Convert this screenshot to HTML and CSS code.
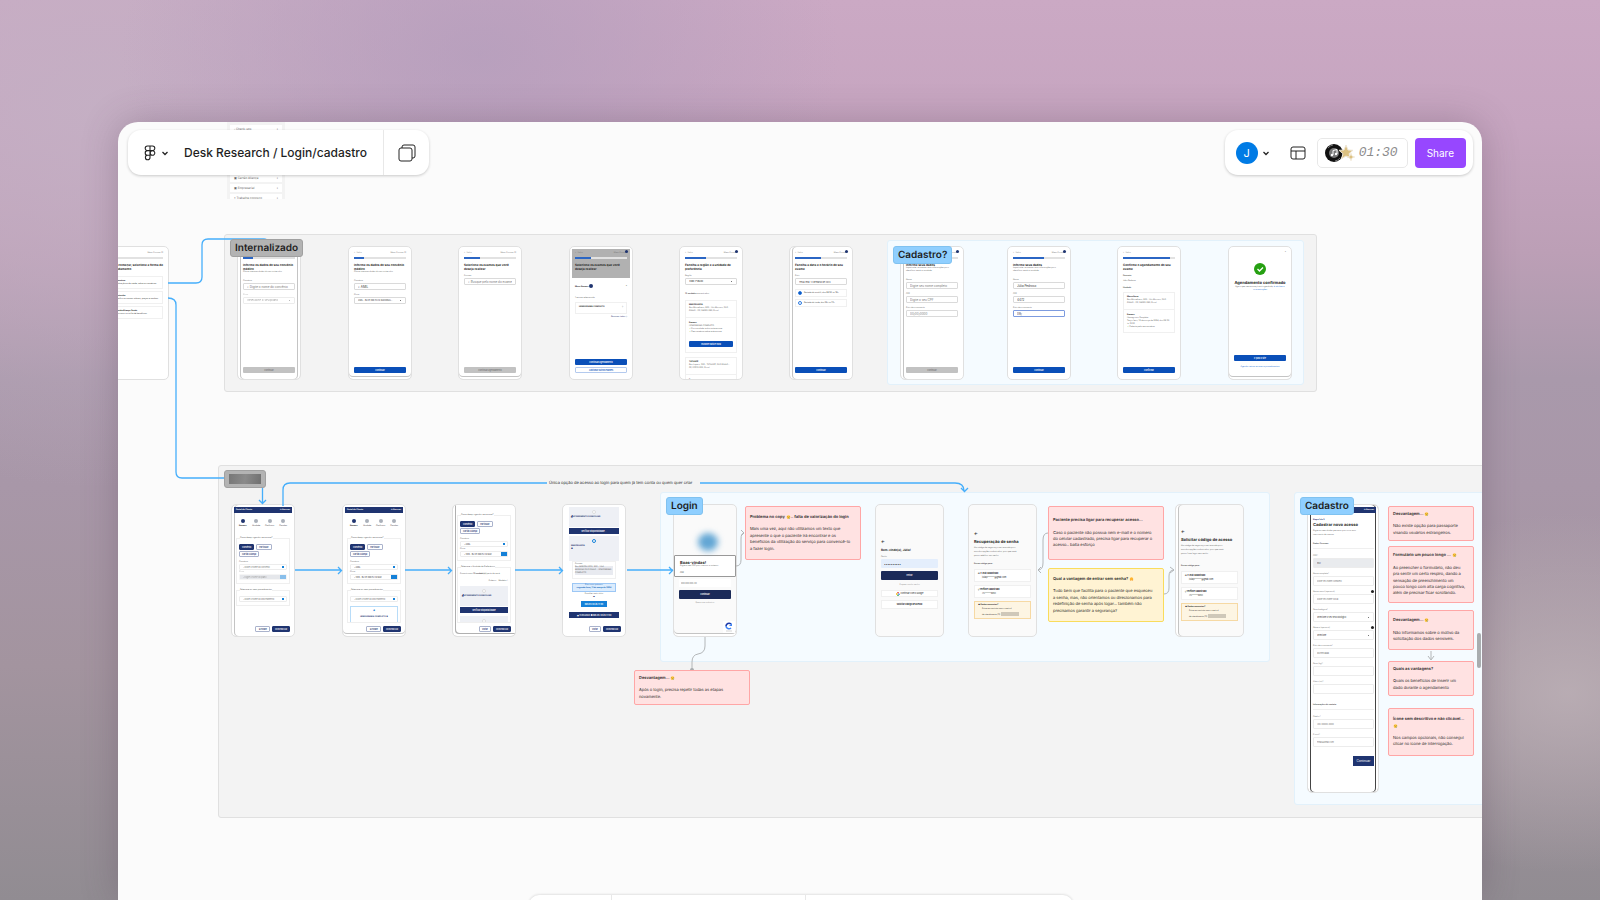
FILE: index.html
```
<!-- Index.html -->
<!DOCTYPE html>
<html lang="pt-BR">
<head>
    <meta charset="utf-8">
    <title>Desk Research / Login/cadastro</title>
    <meta name="viewport" content="width=device-width, initial-scale=1.0">
    <link rel="stylesheet" href="styles.css">
</head>
<body>
    <!-- Shared icons -->
    <svg class="sprite" aria-hidden="true">
        <symbol id="sad" viewBox="0 0 16 16">
            <circle cx="8" cy="8" r="7.5" fill="#ffc83d"/>
            <circle cx="5" cy="7" r="1.3" fill="#5c3a0a"/>
            <circle cx="11" cy="7" r="1.3" fill="#5c3a0a"/>
            <path d="M5 12q3-3 6 0" fill="none" stroke="#5c3a0a" stroke-width="1.4"/>
            <path d="M11 8.5q4 4.5 1 6.500q-3.500-1-1-6.500" fill="#4aa8f0"/>
        </symbol>
        <symbol id="hug" viewBox="0 0 16 16">
            <circle cx="8" cy="7" r="6.500" fill="#ffb52e"/>
            <path d="M1 10q3-1 5 2l-2 3q-3-1-3-5M15 10q-3-1-5 2l2 3q3-1 3-5" fill="#f28c1b"/>
        </symbol>
        <symbol id="chevron" viewBox="0 0 8 8">
            <path d="M1.500 3l2.500 2.500L6.500 3" fill="none" stroke="#222" stroke-width="1.300"/>
        </symbol>
    </svg>

    <main class="window">
        <div class="board">
            <!-- Sections -->
            <div class="section section-internal"></div>
            <div class="section section-portal"></div>
            <div class="section blue section-confirm"></div>
            <div class="section blue section-login"></div>
            <div class="section blue section-signup"></div>

            <!-- Menu clipped by the toolbar -->
            <ul class="mini-menu">
                <li>▫ Check-ups <b>›</b></li>
                <li class="gap">▣ Cartão Aliança <b>›</b></li>
                <li>▣ Empresarial <b>›</b></li>
                <li>▪ Trabalhe conosco <b>›</b></li>
            </ul>

            <!-- First flow -->
            <div class="phone a0">
                <div class="top"><span></span><span>Meus Exames ▢</span></div>
                <div class="progress"></div>
                <h3>Para começar, selecione a forma de agendamento</h3>
                <div class="option mt-6"><b>Convênio</b><span>Utilize plano de saúde, sobre os convênios</span></div>
                <div class="option"><b>Particular</b><span>Confira os nossos valores, preços e combos</span></div>
                <div class="option"><b>Cartão Aliança Saúde</b><span>Para usar o cartão de benefícios</span></div>
            </div>

            <div class="phone a1 edge-sides">
                <div class="top"></div>
                <div class="progress p20"></div>
                <h3>Informe os dados do seu convênio médico</h3>
                <p>São os mesmos dados da sua carteirinha</p>
                <label class="field mt-6">Convênio<input type="text" placeholder="⌕ Digite o nome do convênio"></label>
                <label class="field mt-4 off">Plano<select><option>Selecione o seu plano</option></select></label>
                <button class="btn gray">Continuar</button>
            </div>

            <div class="phone a2 edge-bottom">
                <div class="top"><span>← Voltar</span><span>Meus Exames ▢</span></div>
                <div class="progress p20"></div>
                <h3>Informe os dados do seu convênio médico</h3>
                <p>São os mesmos dados da sua carteirinha</p>
                <label class="field mt-6">Convênio<input type="text" value="⌕ AMIL"></label>
                <label class="field mt-4">Plano<select class="long"><option>AMIL - BLUE 300 PLUS NACIONAL -</option></select></label>
                <button class="btn">Continuar</button>
            </div>

            <div class="phone a3 edge-bottom">
                <div class="top"><span>← Voltar</span><span>Meus Exames ▢</span></div>
                <div class="progress p30"></div>
                <h3>Selecione os exames que você deseja realizar</h3>
                <label class="field mt-4">Exames<input type="text" placeholder="⌕ Busque pelo nome do exame"></label>
                <button class="btn gray">Continuar agendamento</button>
            </div>

            <div class="phone a4">
                <div class="shade">
                    <div class="top dotted"><span>← Voltar</span><span>Meus Exames</span></div>
                    <div class="progress p30"></div>
                    <h3>Selecione os exames que você deseja realizar</h3>
                </div>
                <div class="sheet">
                    <div class="line"><b>Meus Exames <i class="dot"></i></b><span>×</span></div>
                    <p class="mt-8">1 exame selecionado</p>
                    <div class="box row mt-2"><b>HEMOGRAMA COMPLETO</b><span>▯</span></div>
                    <p class="right navy mt-2">Remover todos ▯</p>
                </div>
                <button class="btn">Continuar agendamento</button>
                <button class="btn outline">Adicionar outros exames</button>
            </div>

            <div class="phone a5">
                <div class="top dotted"><span>← Voltar</span><span>Meus Exames</span></div>
                <div class="progress p40"></div>
                <h3>Escolha a região e a unidade de preferência</h3>
                <label class="field mt-4">Região<select><option>São Paulo</option></select></label>
                <p class="mt-8"><b>13 unidades</b> encontradas</p>
                <div class="card mt-4">
                    <b>MARSELHESA</b>
                    <p>Rua Marselhesa, 500 - Vila Mariana, SÃO PAULO - SP, 04020-060, Brasil</p>
                    <hr>
                    <b>Exames</b>
                    <p>HEMOGRAMA COMPLETO</p>
                    <p class="ok">Essa unidade realiza este exame</p>
                    <p class="ok">Seu convênio cobre este exame</p>
                    <button class="btn">Escolher data e hora</button>
                </div>
                <div class="card open mt-4">
                    <b>TATUAPÉ</b>
                    <p>Rua Itapura, 300 - TATUAPÉ, SÃO PAULO - SP, 03310-000, Brasil</p>
                    <hr>
                    <b>Exames</b>
                </div>
            </div>

            <div class="phone a6 edge-left">
                <div class="top dotted"><span>← Voltar</span><span>Meus Exames</span></div>
                <div class="progress p50"></div>
                <h3>Escolha a data e o horário do seu exame</h3>
                <label class="field mt-4">Data<input class="long" type="text" value="Terça-feira, 12 de março de 2024"></label>
                <label class="pick mt-4"><input type="radio" name="periodo" checked> Período da manhã, das 06:30 às 12h</label>
                <label class="pick mt-2"><input type="radio" name="periodo"> Período da tarde, das 12h às 17h</label>
                <button class="btn">Continuar</button>
            </div>

            <div class="phone a7 edge-left">
                <div class="top dotted"><span></span><span>Exames</span></div>
                <div class="progress"></div>
                <h3>Informe seus dados</h3>
                <p>Importante: usaremos suas informações para identificar você na unidade.</p>
                <label class="field mt-6">Nome<input type="text" placeholder="Digite seu nome completo"></label>
                <label class="field mt-4">CPF<input type="text" placeholder="Digite o seu CPF"></label>
                <label class="field mt-4">Data de nascimento<input type="text" placeholder="00/00/0000"></label>
                <button class="btn gray">Continuar</button>
            </div>

            <div class="phone a8">
                <div class="top dotted"><span>← Voltar</span><span>Meus Exames</span></div>
                <div class="progress p60"></div>
                <h3>Informe seus dados</h3>
                <p>Importante: usaremos suas informações para identificar você na unidade.</p>
                <label class="field mt-6">Nome<input type="text" value="Júlia Pedroso"></label>
                <label class="field mt-4">CPF<input type="text" value="4472"></label>
                <label class="field mt-4 active">Data de nascimento<input type="text" value="09/"></label>
                <button class="btn">Continuar</button>
            </div>

            <div class="phone a9">
                <div class="top"><span>← Voltar</span></div>
                <div class="progress p90"></div>
                <h3>Confirme o agendamento do seu exame</h3>
                <p class="mt-4"><b>Paciente</b></p>
                <p class="mt-2">Júlia Pedroso</p>
                <p class="mt-4"><b>Unidade</b></p>
                <div class="card mt-2">
                    <b>Marselhesa</b>
                    <p>Rua Marselhesa, 500 - Vila Mariana, SÃO PAULO - SP, 04020-060, Brasil</p>
                    <hr>
                    <b>Exames</b>
                    <p>Hemograma Completo</p>
                    <p>Terça-feira, 12 de março de 2024, das 06:30 às 12:00</p>
                    <p class="ok">Coberto pelo seu convênio</p>
                </div>
                <button class="btn">Confirmar</button>
            </div>

            <div class="phone a10 edge-bottom">
                <p class="right">×</p>
                <svg class="check" viewBox="0 0 12 12"><circle cx="6" cy="6" r="6" fill="#26a012"/><path d="M3.500 6l2 2 3.500-3.500" fill="none" stroke="#fff" stroke-width="1.300"/></svg>
                <h3 class="center big">Agendamento confirmado</h3>
                <p class="center">Agora que seu exame já está agendado, <a href="#">é só checar as orientações</a></p>
                <button class="btn">Ir para o site</button>
                <a class="more" href="#">Agendar outros exames e procedimentos</a>
            </div>

            <!-- Second flow -->
            <div class="phone portal b1 edge-left">
                <div class="nav"><b>Portal do Cliente</b><b>➔ Acessar</b></div>
                <div class="steps"><b>Exames</b><span>Unidade</span><span>Confirmar</span><span>Concluir</span></div>
                <fieldset>
                    <legend>Como deseja agendar seu exame?</legend>
                    <div class="chips"><button class="on">Convênio</button><button>Particular</button><button>Cartão Aliança</button></div>
                    <label class="field mt-4">Convênio<input type="text" placeholder="⌕ Digite o nome do convênio"></label>
                    <label class="field combo off">Plano<select><option>⌕ Digite o nome do plano</option></select></label>
                </fieldset>
                <fieldset>
                    <legend>Selecione os seus procedimentos</legend>
                    <label class="field"><input type="text" aria-label="Procedimento" placeholder="⌕ Digite o nome do procedimento"></label>
                </fieldset>
                <div class="actions"><button>◀ HOME</button><button class="on">CONTINUAR</button></div>
            </div>

            <div class="phone portal b2 edge-bottom">
                <div class="nav"><b>Portal do Cliente</b><b>➔ Acessar</b></div>
                <div class="steps"><b>Exames</b><span>Unidade</span><span>Confirmar</span><span>Concluir</span></div>
                <fieldset>
                    <legend>Como deseja agendar seu exame?</legend>
                    <div class="chips"><button class="on">Convênio</button><button>Particular</button><button>Cartão Aliança</button></div>
                    <label class="field mt-4">Convênio<input type="text" value="⌕ AMIL"></label>
                    <label class="field combo">Plano<select><option>⌕ 1010 - BLUE 300 PLUS NAC</option></select></label>
                </fieldset>
                <fieldset class="bare">
                    <legend>Selecione os seus procedimentos</legend>
                    <label class="field"><input type="text" aria-label="Procedimento" placeholder="⌕ Digite o nome do procedimento"></label>
                    <div class="exam"><i>◆</i><b>HEMOGRAMA COMPLETO ✖</b></div>
                </fieldset>
                <div class="actions"><button>◀ HOME</button><button class="on">CONTINUAR</button></div>
            </div>

            <div class="phone portal b3 edge-left edge-bottom">
                <fieldset class="first">
                    <legend>Como deseja agendar seu exame?</legend>
                    <div class="chips"><button class="on">Convênio</button><button>Particular</button><button>Cartão Aliança</button></div>
                    <label class="field mt-4">Convênio<input type="text" value="⌕ AMIL"></label>
                    <label class="field combo">Plano<select><option>⌕ 1010 - BLUE 300 PLUS NAC</option></select></label>
                </fieldset>
                <fieldset class="bare">
                    <legend>Selecione a Unidade de Preferência</legend>
                    <p>Encontramos <b>13 unidade(s)</b> perto de você</p>
                    <p class="right mt-4">Ordenar: &nbsp; Modelos ˅</p>
                    <div class="place mt-4"><i class="ring"></i><b>▟ ATENDIMENTO DOMICILIAR</b></div>
                    <button class="bar">Verificar disponibilidade</button>
                    <div class="place low"><i class="ring"></i></div>
                </fieldset>
                <div class="actions"><button>Voltar</button><button class="on">CONTINUAR</button></div>
            </div>

            <div class="phone portal b4">
                <div class="place mt-2"><i class="ring"></i><b>▟ ATENDIMENTO DOMICILIAR</b></div>
                <button class="bar">Verificar disponibilidade...</button>
                <div class="place mt-2 tall"><i class="ring fill"></i><b>MARSELHESA</b><b>●</b></div>
                <div class="box inset">
                    <p>Exames</p>
                    <p class="hl">Rua MARSELHESA, 500 - VILA MARIANA SÃO PAULO - HEMOGRAMA COMPLETO</p>
                </div>
                <div class="date">Data mais próxima:<b>segunda-feira, 11 de março de 2024</b></div>
                <p class="center">Escolher outra data</p>
                <p class="center navy">▣</p>
                <button class="time">das 06:30 às 17:00</button>
                <button class="bar">▣ 11/03/2024 ● das 06:30 às 17:00</button>
                <div class="actions"><button>Voltar</button><button class="on">CONTINUAR</button></div>
            </div>

            <div class="phone login b5 edge-bottom">
                <div class="blob"></div>
                <div class="welcome"><h3 class="big">Boas-vindas!</h3><p>Digite o seu CPF para acessar o sistema.</p><label for="cpf">CPF</label></div>
                <input id="cpf" type="text" placeholder="000.000.000-00">
                <button class="btn dark">Continuar</button>
                <p class="center">Quero me cadastrar</p>
                <svg class="captcha" viewBox="0 0 12 12"><path d="M3 5a3 3 0 0 1 5-2" fill="none" stroke="#1c3aa9" stroke-width="1.600"/><path d="M9 2v3H6" fill="#4285f4"/><path d="M3 5a3 3 0 0 0 5 2" fill="none" stroke="#4285f4" stroke-width="1.600"/><path d="M3 10h6" stroke="#bbb" stroke-width=".6"/></svg>
            </div>

            <div class="phone access b6">
                <b class="back first">←</b>
                <h3>Bem-vindo(a), Júlia!</h3>
                <label class="field mt-4">Senha<input type="text" value="••••••••••"></label>
                <button class="btn dark">Entrar</button>
                <p class="center mt-4"><a class="muted" href="#">Esqueci minha senha</a></p>
                <button class="plain">
                    <svg viewBox="0 0 8 8"><path d="M6 2a3 3 0 0 0-4 0" stroke="#ea4335"/><path d="M2 2a3 3 0 0 0 0 4" stroke="#fbbc05"/><path d="M2 6a3 3 0 0 0 4 0" stroke="#34a853"/><path d="M6 6q1-1 1-2H4" stroke="#4285f4"/></svg>
                    Continuar com o Google
                </button>
                <button class="plain strong">Solicitar código de acesso</button>
            </div>

            <div class="phone access b7">
                <b class="back">←</b>
                <h3 class="big">Recuperação de senha</h3>
                <p class="copy">Um código de segurança será enviado para<br>uma das opções cadastradas, para que você<br>possa redefinir sua senha.</p>
                <p class="copy mt-4"><b>Enviar código para:</b></p>
                <button class="plain two"><b>✉ E-mail cadastrado</b><span>julia.p*******@gmail.com</span></button>
                <button class="plain two"><b>▯ Telefone cadastrado</b><span>(11)******8852</span></button>
                <div class="warn"><b>▲ Dados incorretos?</b><span>Entre em contato com a central</span><span>de atendimento (11) <i></i></span></div>
            </div>

            <div class="phone access b8 edge-left">
                <b class="back">←</b>
                <h3 class="big">Solicitar código de acesso</h3>
                <p class="copy">Um código de segurança será enviado para<br>uma das opções cadastradas, para que você<br>possa fazer login sem senha.</p>
                <p class="copy mt-8"><b>Enviar código para:</b></p>
                <button class="plain two"><b>✉ E-mail cadastrado</b><span>julia.p*******@gmail.com</span></button>
                <button class="plain two"><b>▯ Telefone cadastrado</b><span>(11)******8852</span></button>
                <div class="warn"><b>▲ Dados incorretos?</b><span>Entre em contato com a central</span><span>de atendimento (11) <i></i></span></div>
            </div>

            <div class="phone signup c1">
                <div class="nav"><b></b><b>➔ Acessar</b></div>
                <p class="navy mt-6"><b>Etapa 1 de 3</b></p>
                <h3 class="big">Cadastrar novo acesso</h3>
                <p class="copy">Digite os seus dados pessoais para criar uma<br>nova conta de acesso.</p>
                <p class="copy rule"><b>Dados Pessoais</b></p>
                <label class="field locked">CPF*<input type="text" value="552"></label>
                <label class="field">Nome completo*<input type="text" placeholder="Digite seu nome completo"></label>
                <label class="field help">Nome social (opcional)<input type="text" placeholder="Digite seu nome social"></label>
                <label class="field">Sexo biológico*<select><option>Selecione o seu sexo biológico</option></select></label>
                <label class="field help">Gênero (opcional)<select><option>Selecione</option></select></label>
                <label class="field">Data de nascimento*<input type="text" placeholder="dd/mm/aaaa"></label>
                <label class="field">Peso (kg)*<input type="text"></label>
                <label class="field">Altura (m)*<input type="text"></label>
                <p class="copy rule"><b>Informações de contato</b></p>
                <label class="field">Celular*<input type="text" placeholder="(00) 00000-0000"></label>
                <label class="field">E-mail*<input type="text" placeholder="email@gmail.com"></label>
                <button class="send">Continuar</button>
            </div>

            <!-- Connectors -->
            <svg class="links" viewBox="118 122 1364 778" preserveAspectRatio="xMinYMin slice">
                <g class="blue-line">
                    <path d="M168 283h28q6 0 6-6v-32q0-6 6-6h56q3 0 3 2"/>
                    <path d="M168 298q8 0 8 7v167q0 6 6 6h42"/>
                    <path d="M262.500 488v15M259 500l3.500 3.500L266 500"/>
                    <path d="M283 506v-16q0-7 7-7h257M700 483h255q9 0 9 8M961 488l3.500 3.500L968 488"/>
                    <path d="M295 570h46M338 567l3.500 3.500L338 574M405 570h46M448 567l3.500 3.500L448 574M515 570h47M559 567l3.500 3.500L559 574M627 570h46M669 567l3.500 3.500L669 574"/>
                </g>
                <g class="gray-line">
                    <path d="M736 566q5 0 5-6v-21q0-6 3-6M741 530l3 3-3 3"/>
                    <path d="M705 637v9q0 7-7 8-6 1-6 8v8"/>
                    <path d="M1048 533q-5 0-5 7v23q0 7-5 7M1041 567l-3 3 3 3"/>
                    <path d="M1164 594q5 0 5-6v-12q0-6 5-6M1170 567l4 3-4 3"/>
                    <path d="M1431 651v8M1428 656l3 4 3-4"/>
                </g>
                <circle cx="692" cy="670" r="2" fill="#a9acae"/>
            </svg>
            <span class="link-text">Única opção de acesso ao login para quem já tem conta ou quem quer criar</span>

            <!-- Section names -->
            <h2 class="tag gray-tag t1">Internalizado</h2>
            <h2 class="tag t2">Cadastro?</h2>
            <div class="tag gray-tag t3"><i></i></div>
            <h2 class="tag t4">Login</h2>
            <h2 class="tag t5">Cadastro</h2>

            <!-- Notes -->
            <article class="note n1"><h4>Problema no copy <svg><use href="#sad"/></svg>.. falta de valorização do login</h4><p>Mais uma vez, aqui não utilizamos um texto que<br>apresente o que o paciente irá encontrar e os<br>benefícios da utilização do serviço para convencê-lo<br>a fazer login.</p></article>
            <article class="note n2"><h4>Desvantagem... <svg><use href="#sad"/></svg></h4><p>Após o login, precisa repetir todas as etapas<br>novamente.</p></article>
            <article class="note n3"><h4>Paciente precisa ligar para recuperar acesso...</h4><p>Caso o paciente não possua nem e-mail e o número<br>do celular cadastrado, precisa ligar para recuperar o<br>acesso.. baita esforço</p></article>
            <article class="note yellow n4"><h4>Qual a vantagem de entrar sem senha? <svg><use href="#hug"/></svg></h4><p>Tudo bem que facilita para o paciente que esqueceu<br>a senha, mas, não orientamos ou direcionamos para<br>redefinição de senha após logar... também não<br>precisamos garantir a segurança?</p></article>
            <article class="note narrow n5"><h4>Desvantagem... <svg><use href="#sad"/></svg></h4><p>Não existe opção para passaporte<br>visando usuários estrangeiros.</p></article>
            <article class="note narrow n6"><h4>Formulário um pouco longo ... <svg><use href="#sad"/></svg></h4><p>Ao preencher o formulário, não deu<br>pra sentir um certo respiro, dando a<br>sensação de preenchimento um<br>pouco longo com alta carga cognitiva,<br>além de precisar ficar scrollando.</p></article>
            <article class="note narrow n7"><h4>Desvantagem... <svg><use href="#sad"/></svg></h4><p>Não informamos sobre o motivo da<br>solicitação dos dados sensíveis.</p></article>
            <article class="note narrow n8"><h4>Quais as vantagens?</h4><p>Quais os benefícios de inserir um<br>dado durante o agendamento</p></article>
            <article class="note narrow n9"><h4>Ícone sem descritivo e não clicável...<br><svg><use href="#sad"/></svg></h4><p>Nos campos opcionais, não consegui<br>clicar no ícone de interrogação.</p></article>
        </div>

        <header class="toolbars">
            <div class="toolbar">
                <button class="menu-button" aria-label="Menu">
                    <svg class="logo" viewBox="0 0 12 16"><path d="M6 1H3.500a2.300 2.300 0 0 0 0 4.600H6zM6 1h2.500a2.300 2.300 0 0 1 0 4.600H6M6 5.600H3.500a2.300 2.300 0 0 0 0 4.600H6zM8.500 5.600a2.300 2.300 0 1 1 0 4.600 2.300 2.300 0 0 1 0-4.600M6 10.200H3.500A2.300 2.300 0 1 0 6 12.500zM6 1v11.500" fill="none" stroke="#222" stroke-width="1.100"/></svg>
                    <svg class="small"><use href="#chevron"/></svg>
                </button>
                <h1>Desk Research / Login/cadastro</h1>
                <button class="pages" aria-label="Pages">
                    <svg viewBox="0 0 18 18"><rect x="1" y="4" width="13" height="13" rx="2"/><path d="M4 4V3a2 2 0 0 1 2-2h9a2 2 0 0 1 2 2v9a2 2 0 0 1-2 2h-1"/></svg>
                </button>
            </div>
            <div class="toolbar right-bar">
                <button class="user" aria-label="Account"><span class="avatar">J</span><svg class="small"><use href="#chevron"/></svg></button>
                <button class="layout" aria-label="Layout">
                    <svg viewBox="0 0 16 14"><rect x="1" y="1" width="14" height="12" rx="2"/><path d="M1 5h14M6 5v8"/></svg>
                </button>
                <button class="timer">
                    <svg viewBox="0 0 30 20">
                        <circle cx="9" cy="10" r="9" fill="#111"/>
                        <path d="M3 5a8 8 0 0 1 5-3M15 15a8 8 0 0 1-5 3" stroke="#777" fill="none"/>
                        <circle cx="9" cy="10" r="5" fill="#777"/>
                        <path d="M8 12V7.500l4-1V11" stroke="#fff" fill="none"/>
                        <circle cx="7" cy="12" r="1.200" fill="#fff"/><circle cx="11" cy="11" r="1.200" fill="#fff"/>
                        <path d="M21 2l2 5 5 .3-4 3.400 1.500 5-4.500-2.700-4.500 2.700 1.500-5-4-3.400 5-.3z" fill="#dcc181" stroke="#eee6d6"/>
                        <path d="M26 10l1 3 3 1-3 1-1 3-1-3-3-1 3-1z" fill="#dcc181" stroke="#f3eee3" stroke-width=".7"/>
                    </svg>
                    <span>01:30</span>
                </button>
                <button class="share">Share</button>
            </div>
        </header>

        <div class="scroll-thumb"></div>
        <div class="dock"><span></span><span></span><span></span></div>
    </main>
</body>
</html>
```
FILE: styles.css
```
* {
    margin: 0;
    padding: 0;
    box-sizing: border-box;
}

body {
    height: 100vh;
    padding: 122px 118px 0;
    overflow: hidden;
    font-family: Inter, sans-serif;
    color: #1e1e1e;
    background:
        radial-gradient(ellipse 240px 180px at 98% 77%, rgba(190, 178, 184, 0.8), transparent),
        radial-gradient(ellipse 360px 260px at 30% 6%, rgba(180, 158, 188, 0.8), transparent),
        radial-gradient(ellipse 420px 380px at 6% 12%, rgba(196, 176, 196, 0.9), transparent),
        linear-gradient(180deg, #cba9c4 0%, #c6a5c0 14%, #bc9fb6 28%, #a999ab 42%, #a897a8 54%, #a3949f 74%, #918c92 100%);
}

button, input, select {
    font: inherit;
    color: inherit;
    background: none;
    border: 0;
    appearance: none;
}

.sprite {
    position: absolute;
    width: 0;
    height: 0;
}

.window {
    position: relative;
    height: 100%;
    background: #fbfbfb;
    border-radius: 20px 20px 0 0;
    overflow: hidden;
    box-shadow: 0 0 36px rgba(80, 60, 80, 0.3);
}

.board {
    position: absolute;
    inset: 0;
    text-rendering: geometricPrecision;
}

/* Toolbars */
.toolbars {
    position: relative;
    display: flex;
    justify-content: space-between;
    padding: 8px 9px 0 10px;
}

.toolbar {
    display: flex;
    align-items: center;
    height: 45px;
    background: #fff;
    border-radius: 13px;
    box-shadow: 0 1px 3px rgba(0, 0, 0, 0.2);
}

.menu-button {
    display: flex;
    align-items: center;
    gap: 5px;
    padding: 0 15px 0 16px;
}

.logo {
    width: 12px;
    height: 16px;
}

.small {
    width: 8px;
    height: 8px;
}

h1 {
    font-size: 12px;
    font-weight: 500;
    padding-right: 16px;
}

.pages {
    height: 45px;
    padding: 0 13px 0 14px;
    border-left: 1px solid #e8e8e8;
}

.pages svg {
    display: block;
    width: 18px;
    height: 18px;
}

.pages path, .pages rect, .layout path, .layout rect {
    fill: none;
    stroke: #222;
}

.right-bar {
    padding: 0 7px 0 11px;
}

.user {
    display: flex;
    align-items: center;
    gap: 4px;
}

.avatar {
    width: 22px;
    height: 22px;
    border-radius: 50%;
    background: #007be5;
    color: #fff;
    font-size: 11px;
    line-height: 22px;
}

.layout {
    margin: 0 11px 0 20px;
}

.layout svg {
    display: block;
    width: 16px;
    height: 14px;
}

.timer {
    display: flex;
    align-items: center;
    gap: 4px;
    height: 30px;
    padding: 0 9px 0 7px;
    border: 1px solid #e8e8e8;
    border-radius: 5px;
}

.timer svg {
    width: 30px;
    height: 20px;
}

.timer span {
    width: 39px;
    font: italic 13px "Liberation Mono", monospace;
    color: #8c8c8c;
}

.share {
    height: 30px;
    margin-left: 7px;
    padding: 0 12px;
    border-radius: 4px;
    background: #9747ff;
    color: #fff;
    font-size: 10px;
}

.scroll-thumb {
    position: absolute;
    right: 1px;
    top: 511px;
    width: 4px;
    height: 35px;
    border-radius: 2px;
    background: #a9adaf;
}

.dock {
    position: absolute;
    left: 411px;
    right: 409px;
    bottom: -35px;
    height: 40px;
    display: grid;
    grid-template-columns: 82px 194px 1fr;
    border-radius: 10px;
    background: #fff;
    box-shadow: 0 0 3px rgba(0, 0, 0, 0.2);
}

.dock span + span {
    border-left: 1px solid #e8e8e8;
}

/* Sections */
.section {
    position: absolute;
    background: #f3f3f3;
    border: 1px solid #e0e0e0;
    border-radius: 3px;
}

.blue {
    background: #f5fbff;
    border-color: #e2f1fb;
}

.section-internal { left: 106px; top: 112px; width: 1093px; height: 158px; }
.section-portal { left: 100px; top: 343px; right: -10px; height: 353px; }
.section-confirm { left: 769px; top: 118px; width: 417px; height: 145px; }
.section-login { left: 542px; top: 370px; width: 610px; height: 170px; }
.section-signup { left: 1176px; top: 370px; right: -10px; height: 313px; }

.tag {
    position: absolute;
    height: 18px;
    padding: 0 4px;
    border: 1px solid #80c2f0;
    border-radius: 3px;
    background: #8fcfff;
    font-size: 10px;
    font-weight: 600;
    line-height: 16px;
    white-space: nowrap;
}

.gray-tag {
    background: #b3b3b3;
    border-color: #a0a0a0;
}

.t1 { left: 112px; top: 117px; }
.t2 { left: 775px; top: 124px; }
.t3 { left: 106px; top: 348px; }
.t4 { left: 548px; top: 375px; }
.t5 { left: 1182px; top: 375px; }

.t3 i {
    display: block;
    width: 32px;
    height: 10px;
    margin-top: 3px;
    background: linear-gradient(100deg, #777, #8a8a8a 50%, #707070);
}

.mini-menu {
    position: absolute;
    left: 109px;
    top: 0;
    width: 58px;
    height: 77px;
    padding: 3px 3px 0;
    overflow: hidden;
    list-style: none;
    background: #f3f3f3;
    font-size: 3px;
    color: #666;
}

.mini-menu li {
    display: flex;
    gap: 2px;
    height: 8px;
    margin-bottom: 2px;
    padding: 0 4px;
    line-height: 8px;
    background: #fff;
}

.mini-menu .gap { margin-top: 41px; }

.mini-menu b {
    margin-left: auto;
}

/* Connectors */
.links {
    position: absolute;
    left: 0;
    top: 0;
    width: 1364px;
    height: 778px;
}

.blue-line, .gray-line {
    fill: none;
    stroke: #45aefb;
    stroke-width: 1.3;
}

.gray-line {
    stroke: #b3b6b8;
    stroke-width: 1;
}

.link-text {
    position: absolute;
    left: 431px;
    top: 358px;
    font-size: 4px;
    line-height: 6px;
    white-space: nowrap;
}

/* Notes */
.note {
    position: absolute;
    display: flex;
    flex-direction: column;
    justify-content: center;
    width: 116px;
    height: 54px;
    padding: 0 4px;
    border: 1px solid #ffa6a6;
    border-radius: 2px;
    background: #ffe2e2;
    font-size: 4px;
    line-height: 1.6;
    white-space: nowrap;
}

.note h4 {
    margin-bottom: 6px;
    font-size: 4px;
    font-weight: 600;
}

.note svg {
    width: 5px;
    height: 4px;
    vertical-align: middle;
}

.narrow {
    width: 86px;
    height: 35px;
}

.yellow {
    background: #fff3d3;
    border-color: #f9dc5c;
}

.n1 { left: 627px; top: 384px; }
.n2 { left: 516px; top: 548px; height: 35px; }
.n3 { left: 930px; top: 384px; }
.n4 { left: 930px; top: 446px; }
.n5 { left: 1270px; top: 384px; }
.n6 { left: 1270px; top: 424px; height: 57px; }
.n7 { left: 1270px; top: 488px; height: 40px; }
.n8 { left: 1270px; top: 539px; }
.n9 { left: 1270px; top: 586px; height: 48px; }

/* Screens */
.phone {
    position: absolute;
    top: 124px;
    display: flex;
    flex-direction: column;
    width: 64px;
    height: 134px;
    padding: 4px 5px 6px;
    overflow: hidden;
    border: 1px solid #e0e0e0;
    border-radius: 5px;
    background: #fff;
    font-size: 2px;
    line-height: 3px;
}

.a0 { left: -13px; }
.a1 { left: 119px; }
.a2 { left: 230px; }
.a3 { left: 340px; }
.a4 { left: 451px; }
.a5 { left: 561px; }
.a6 { left: 671px; }
.a7 { left: 782px; }
.a8 { left: 889px; }
.a9 { left: 999px; }
.a10 { left: 1110px; }
.b1 { left: 113px; }
.b2 { left: 224px; }
.b3 { left: 334px; }
.b4 { left: 444px; }
.b5 { left: 555px; }
.b6 { left: 757px; }
.b7 { left: 850px; }
.b8 { left: 1057px; }
.c1 { left: 1189px; }

.edge-left { box-shadow: inset 2px 0 #fff, inset 3px 0 #c4c4c4; }
.edge-bottom { box-shadow: inset 0 -2px #fff, inset 0 -3px #c4c4c4; }
.edge-sides { box-shadow: inset 2px 0 #fff, inset -2px 0 #fff, inset 3px 0 #c4c4c4, inset -3px 0 #c4c4c4; }
.edge-left.edge-bottom { box-shadow: inset 2px -2px #fff, inset 3px -3px #b0b0b0; }

.mt-2 { margin-top: 2px; }
.mt-4 { margin-top: 4px; }
.mt-6 { margin-top: 6px; }
.mt-8 { margin-top: 8px; }

.top {
    display: flex;
    flex: none;
    justify-content: space-between;
    height: 5px;
    line-height: 5px;
    color: #777;
}

.dotted::after {
    content: "";
    position: absolute;
    top: 3px;
    right: 4px;
    width: 3px;
    height: 3px;
    border-radius: 50%;
    background: #1f3470;
}

.progress {
    flex: none;
    height: 2px;
    margin: 1px 0 4px;
    background: #e2e2e2;
}

.p20 { background: linear-gradient(90deg, #2b66c4 20%, #e2e2e2 20%); }
.p30 { background: linear-gradient(90deg, #2b66c4 30%, #e2e2e2 30%); }
.p40 { background: linear-gradient(90deg, #2b66c4 40%, #e2e2e2 40%); }
.p50 { background: linear-gradient(90deg, #2b66c4 50%, #e2e2e2 50%); }
.p60 { background: linear-gradient(90deg, #2b66c4 60%, #e2e2e2 60%); }
.p90 { background: linear-gradient(90deg, #2b66c4 90%, #e2e2e2 90%); }

.phone p { color: #555; }

.phone h3 {
    font-size: 3px;
    font-weight: 700;
    line-height: 4px;
}

.phone h3.big {
    font-size: 4px;
    line-height: 5px;
    white-space: nowrap;
}

.phone a { color: #0a5fd0; text-decoration: none; }
.phone .muted { color: #888; }
.center { text-align: center; }
.right { text-align: right; }
.phone .navy { color: #1f3470; }

.field {
    display: block;
    line-height: 3px;
    color: #666;
}

.field input, .field select {
    display: block;
    width: 100%;
    height: 7px;
    padding: 0 3px;
    border: 1px solid #dadada;
    border-radius: 1px;
    font-size: 3px;
    color: #333;
}

.field .long { font-size: 2px; }

.field select {
    background: linear-gradient(#777, #777) right 4px center / 1px 1px no-repeat;
}

.field input::placeholder { color: #777; }
.field.off { opacity: 0.5; }
.field.active input { border-color: #7d9bdf; }

.btn {
    flex: none;
    height: 6px;
    margin-top: auto;
    border-radius: 1px;
    background: #0a4fb8;
    color: #fff;
    font-weight: 600;
    line-height: 6px;
}

.btn.gray {
    background: #c2c2c2;
    color: #777;
}

.btn.outline {
    margin-top: 2px;
    border: 1px solid #b4caee;
    background: #fff;
    color: #0a4fb8;
    line-height: 4px;
}

.btn.dark {
    height: 9px;
    margin-top: 3px;
    background: #1b2a58;
    line-height: 9px;
}

.option {
    display: flex;
    flex-direction: column;
    justify-content: center;
    height: 13px;
    margin-bottom: 2px;
    padding-left: 4px;
    border: 1px solid #f0f0f0;
    white-space: nowrap;
}

.option.mt-6 { margin-top: 5px; }

.shade {
    height: 29px;
    margin: -2px -3px 0;
    padding: 2px 3px;
    background: #b1b1b1;
}

.line, .row {
    display: flex;
    justify-content: space-between;
    align-items: center;
}

.sheet { padding-top: 6px; }

.dot {
    display: inline-block;
    width: 4px;
    height: 4px;
    border-radius: 50%;
    background: #1f3470;
    vertical-align: middle;
}

.box, .card {
    border: 1px solid #f0f0f0;
}

.row {
    height: 12px;
    padding: 0 3px;
}

.card {
    flex: none;
    padding: 3px;
}

.card hr {
    margin: 4px -3px;
    border: 0;
    border-top: 1px solid #f0f0f0;
}

.card .btn {
    display: block;
    width: 100%;
    margin: 7px 0 2px;
}

.card.open { border-bottom: 0; }
.ok::before { content: "✓ "; color: #3cb42c; }

.pick {
    display: flex;
    align-items: center;
    gap: 2px;
    height: 8px;
    padding: 0 2px;
    border: 1px solid #f0f0f0;
    white-space: nowrap;
}

.pick input {
    width: 4px;
    height: 4px;
    border: 1px solid #2d7be0;
    border-radius: 50%;
}

.pick input:checked { background: #0a4fb8; }

.check {
    width: 12px;
    height: 12px;
    margin: 9px auto 5px;
}

.a10 h3.big {
    margin: 0 -3px 1px;
}

.a10 .more {
    margin: 5px 0 4px;
    text-align: center;
}

/* Portal screens */
.portal, .login, .access {
    top: 382px;
    height: 133px;
}

.portal {
    padding: 2px 4px 4px;
}

.nav {
    flex: none;
    display: flex;
    justify-content: space-between;
    height: 6px;
    margin: 0 -2px;
    padding: 0 2px;
    background: #1f3470;
    color: #fff;
    line-height: 6px;
}

.steps {
    display: grid;
    grid-template-columns: repeat(4, 1fr);
    margin: 6px 0 9px;
    text-align: center;
}

.steps > *::before {
    content: "";
    display: block;
    width: 4px;
    height: 4px;
    margin: 0 auto 2px;
    border-radius: 50%;
    background: #aab0ba;
}

.steps b::before { background: #1f3470; }

.portal fieldset {
    min-width: 0;
    margin-bottom: 5px;
    padding: 4px 2px 3px;
    border: 1px solid #efefef;
}

.portal legend {
    margin-left: 1px;
    color: #444;
}

.portal .bare {
    flex: 1;
    min-height: 0;
    margin-bottom: 3px;
    overflow: hidden;
}

.portal .first { margin-top: 7px; }

.chips {
    display: flex;
    flex-wrap: wrap;
    gap: 1px 2px;
}

.chips button, .actions button {
    height: 6px;
    padding: 0 2px;
    border: 1px solid #aab3cc;
    border-radius: 1px;
    color: #1f3470;
    font-weight: 600;
    line-height: 4px;
}

.chips .on, .actions .on {
    border-color: #1f3470;
    background: #1f3470;
    color: #fff;
}

.chips button { min-width: 14px; }
.actions .on { min-width: 18px; }

.portal .field input, .portal .field select {
    height: 6px;
    border-color: #ececec;
    background: linear-gradient(#1581d8, #1581d8) right 2px center / 2px 2px no-repeat;
    font-size: 2px;
}

.portal .combo { margin-top: 1px; }

.portal .combo select {
    background: linear-gradient(#1581d8, #1581d8) right center / 6px 6px no-repeat;
}

.portal .combo.off select { background-color: #ccd0d8; }

.actions {
    flex: none;
    display: flex;
    justify-content: flex-end;
    gap: 2px;
    margin-top: auto;
}

.exam {
    height: 20px;
    margin-top: 4px;
    padding-top: 3px;
    border: 1px solid #b8dcf8;
    text-align: center;
    color: #1f3470;
}

.exam i {
    display: block;
    margin-bottom: 3px;
    color: #1581d8;
}

.place {
    flex: none;
    display: flex;
    flex-direction: column;
    height: 20px;
    margin: 0 2px;
    padding: 3px 2px;
    background: #eef0f5;
    color: #1f3470;
}

.place.tall { height: 25px; }
.portal fieldset .place { margin: 3px 0 0; }
.b4 .place.mt-2 { margin-top: 0; }

.ring {
    width: 4px;
    height: 4px;
    margin: 0 auto 2px;
    border: 1px solid #ddd;
    border-radius: 50%;
    background: #fff;
}

.ring.fill { border-color: #1581d8; }

.bar {
    display: block;
    flex: none;
    width: calc(100% - 4px);
    height: 6px;
    margin: 1px 2px 2px;
    background: #1f3470;
    color: #fff;
    font-weight: 600;
    line-height: 6px;
}

.portal fieldset .bar {
    width: 100%;
    margin: 1px 0;
}

.inset {
    height: 18px;
    margin: 0 5px 4px;
    padding: 1px 2px;
}

.hl { background: #e8eaf0; }

.date {
    height: 9px;
    margin: 0 5px 1px;
    border: 1px solid #9cc7f5;
    background: #dcecfd;
    color: #0a5fb8;
    text-align: center;
    white-space: nowrap;
}

.date b { display: block; }

.time {
    flex: none;
    width: 26px;
    height: 6px;
    margin: 2px auto 4px;
    background: #1581d8;
    color: #fff;
    font-weight: 600;
    line-height: 6px;
}

/* Login screen */
.login {
    padding: 28px 5px 0;
    background: #fafafa;
}

.blob {
    flex: none;
    width: 20px;
    height: 18px;
    margin: 0 auto 4px 19px;
    border-radius: 50%;
    background: #62a6d4;
    filter: blur(3px);
}

.welcome {
    height: 22px;
    margin: 0 -5px 2px;
    padding: 4px 5px 0;
    border: 1px solid #999;
    border-radius: 1px;
    background: #fff;
}

.welcome label { display: block; margin-top: 4px; }

.login input {
    height: 8px;
    padding: 0 2px;
    background: #fff;
}

.login .center { margin-top: 3px; color: #888; }

.captcha {
    width: 12px;
    height: 12px;
    margin: 16px -4px 0 auto;
    background: #fff;
}

/* Access screens */
.access {
    width: 69px;
    padding: 26px 5px 0;
    background: #fafafa;
}

.back {
    font-size: 4px;
    line-height: 5px;
    margin-bottom: 3px;
}

.back.first { margin: 8px 0 4px; }
.b8 { padding-top: 24px; }

.copy {
    margin-top: 2px;
    line-height: 4px;
    white-space: nowrap;
}

.copy.mt-4 { margin-top: 4px; }
.copy.mt-8 { margin-top: 8px; }

.access .field input {
    height: 9px;
    border: 0;
    background: #e4eefc;
}

.plain {
    flex: none;
    display: flex;
    align-items: center;
    justify-content: center;
    gap: 1px;
    height: 7px;
    margin-top: 3px;
    background: #fff;
    border: 1px solid #f0f0f0;
}

.plain svg {
    width: 4px;
    height: 4px;
    fill: none;
    stroke-width: 2;
}

.plain.strong {
    height: 9px;
    font-weight: 700;
}

.plain.two, .warn {
    flex: none;
    display: flex;
    flex-direction: column;
    align-items: flex-start;
    justify-content: center;
    gap: 1px;
    height: 13px;
    padding: 0 3px;
}

.plain.two span, .warn span { padding-left: 4px; }

.warn {
    height: 18px;
    margin-top: 3px;
    border: 1px solid #f6d9a4;
    background: #fdf5e3;
}

.warn i {
    display: inline-block;
    width: 18px;
    height: 4px;
    background: #cfc8b9;
    vertical-align: middle;
}

/* Signup screen */
.signup {
    top: 382px;
    width: 72px;
    height: 289px;
    padding: 2px 4px 0 5px;
    box-shadow: inset 2px 0 #fff, inset -2px 0 #fff, inset 3px 0 #444, inset -3px 0 #444;
}

.signup .rule {
    margin-top: 5px;
    padding-bottom: 2px;
    margin-bottom: 5px;
    border-bottom: 1px solid #efefef;
}

.signup .field {
    position: relative;
    height: 14px;
    margin-bottom: 4px;
    line-height: 4px;
}

.signup .field input, .signup .field select {
    height: 10px;
    border-color: #ececec;
    font-size: 2px;
}

.signup .locked input { background: #e9ebee; }

.help::after {
    content: "";
    position: absolute;
    top: 0;
    right: 0;
    width: 3px;
    height: 3px;
    border-radius: 50%;
    background: #222;
}

.send {
    width: 21px;
    height: 10px;
    margin: 5px 0 0 auto;
    background: #1f3470;
    color: #fff;
    font-size: 3px;
}
```
